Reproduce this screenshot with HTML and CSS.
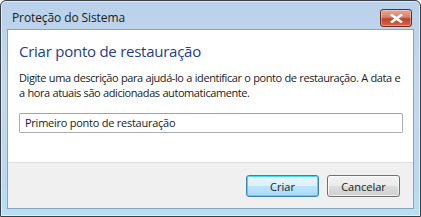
FILE: index.html
```html
<!DOCTYPE html>
<html lang="pt">
<head>
<meta charset="utf-8">
<title>Proteção do Sistema</title>
<link rel="stylesheet" href="styles.css">
</head>
<body>
<div class="window">
  <div class="titlebar">
    <span class="title">Proteção do Sistema</span>
    <button class="close" aria-label="Fechar">
      <svg width="13" height="9" viewBox="0 0 13 9"><path d="M2 1.2 L11 7.8 M11 1.2 L2 7.8" stroke="#fff" stroke-width="2.6" stroke-linecap="square"/></svg>
    </button>
  </div>
  <div class="client">
    <div class="content">
      <h1 class="instruction">Criar ponto de restauração</h1>
      <p class="desc">Digite uma descrição para ajudá-lo a identificar o ponto de restauração. A data e a hora atuais são adicionadas automaticamente.</p>
      <div class="field">Primeiro ponto de restauração</div>
    </div>
    <div class="footer">
      <button class="btn default">Criar</button>
      <button class="btn">Cancelar</button>
    </div>
  </div>
</div>
</body>
</html>
```
FILE: styles.css
```css
html, body { margin: 0; padding: 0; background: #fff; }
body { font-family: "Open Sans", "Noto Sans", sans-serif; }
.window {
  box-sizing: border-box;
  width: 421px;
  height: 217px;
  border: 1px solid #3a3f45;
  border-radius: 6px 6px 0 0;
  background: linear-gradient(to bottom, #b9d1ea 0%, #c4d9ee 40%, #bcd7ef 80%, #b6e0f3 100%);
  display: flex;
  flex-direction: column;
  box-shadow: inset 0 0 0 1px rgba(255,255,255,0.55);
}
.titlebar {
  height: 28px;
  display: flex;
  align-items: flex-start;
  justify-content: space-between;
  padding: 0 8px 0 11px;
}
.title {
  font-size: 12px;
  color: #1b1b1b;
  margin-top: 8px;
  letter-spacing: -0.1px;
}
.close {
  margin-top: 8px;
  width: 32px;
  height: 18px;
  padding: 0;
  border: 1px solid #6b2a1c;
  border-radius: 3px;
  background: linear-gradient(to bottom, #e6a797 0%, #d6826d 45%, #c0422a 55%, #d0674a 100%);
  box-shadow: inset 0 0 0 1px rgba(255,255,255,0.35);
  display: flex;
  align-items: center;
  justify-content: center;
}
.client {
  flex: 1;
  margin: 0 6px 7px 6px;
  border: 1px solid #8aa3c0;
  display: flex;
  flex-direction: column;
  background: #fff;
}
.content {
  flex: 1;
  padding: 11px 10px 0 11px;
  background: #fff;
}
.instruction {
  margin: 0;
  font-weight: normal;
  font-size: 15px;
  color: #1e3e8e;
  line-height: 20px;
  letter-spacing: -0.25px;
}
.desc {
  margin: 9px 0 0 0;
  font-size: 11px;
  line-height: 15px;
  color: #1b1b1b;
  letter-spacing: -0.42px;
  word-spacing: 0.3px;
}
.field {
  margin-top: 13px;
  height: 20px;
  box-sizing: border-box;
  border: 1px solid #abadb3;
  border-top-color: #a0a3ab;
  border-radius: 2px;
  font-size: 11px;
  line-height: 18px;
  padding-left: 5px;
  color: #1b1b1b;
  letter-spacing: -0.25px;
}
.footer {
  height: 46px;
  box-sizing: border-box;
  border-top: 1px solid #dfdfdf;
  background: #f0f0f0;
  display: flex;
  justify-content: flex-end;
  align-items: flex-start;
  gap: 8px;
  padding: 12px 13px 0 0;
}
.btn {
  width: 73px;
  height: 22px;
  box-sizing: border-box;
  border: 1px solid #707070;
  border-radius: 3px;
  background: linear-gradient(to bottom, #f2f2f2 0%, #ebebeb 50%, #dddddd 51%, #cfcfcf 100%);
  font-family: "Open Sans", "Noto Sans", sans-serif;
  font-size: 11px;
  color: #1b1b1b;
  padding: 0;
  box-shadow: inset 0 0 0 1px rgba(255,255,255,0.7);
}
.btn.default {
  border-color: #3c7fb1;
  background: linear-gradient(to bottom, #eaf6fd 0%, #d9f0fc 50%, #bee6fd 51%, #a7d9f5 100%);
  box-shadow: inset 0 0 0 1px #48d8fb;
}
```
